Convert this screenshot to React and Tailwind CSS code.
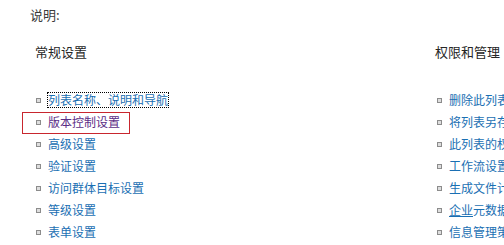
import React from 'react';

const leftLinks = [
  { label: '列表名称、说明和导航', focus: true },
  { label: '版本控制设置', visited: true, boxed: true },
  { label: '高级设置' },
  { label: '验证设置' },
  { label: '访问群体目标设置' },
  { label: '等级设置' },
  { label: '表单设置' },
];

const rightLinks = [
  { label: '删除此列表' },
  { label: '将列表另存为模板' },
  { label: '此列表的权限' },
  { label: '工作流设置' },
  { label: '生成文件计划报告' },
  { label: '企业元数据和关键字设置', underline: 2 },
  { label: '信息管理策略设置' },
];

function LinkRow({ link }) {
  const color = link.visited ? 'text-[#5b2d86]' : 'text-[#1a6fb3]';
  return (
    <li className="relative flex items-center h-[22px] whitespace-nowrap">
      {link.boxed && (
        <span className="absolute left-[-13px] top-[1px] w-[108px] h-[22px] border border-[#c8262e]" />
      )}
      <span className="block ml-[1px] mr-[7px] w-[5px] h-[5px] border border-[#8c8c8c] bg-[#dedede] shrink-0" />
      <a
        href="#"
        className={`${color} text-[12px] leading-[14px] ${link.focus ? 'outline outline-1 outline-dotted outline-black' : ''}`}
      >
        {link.underline ? (
          <>
            <span className="underline">{link.label.slice(0, link.underline)}</span>
            {link.label.slice(link.underline)}
          </>
        ) : (
          link.label
        )}
      </a>
    </li>
  );
}

export default function App() {
  return (
    <div
      className="w-[504px] h-[245px] overflow-hidden bg-white text-[12px] text-[#3b3b3b] pl-[30px] pt-[7px]"
      style={{ fontFamily: '"Noto Sans CJK SC", "Liberation Sans", sans-serif' }}
    >
      <p className="text-[13px] leading-[16px]">说明:</p>
      <div className="flex mt-[20px]">
        <div className="w-[405px] pl-[5px] shrink-0">
          <h3 className="text-[13px] leading-[18px] text-[#262626]">常规设置</h3>
          <ul className="mt-[28px]">
            {leftLinks.map((l) => (
              <LinkRow key={l.label} link={l} />
            ))}
          </ul>
        </div>
        <div className="shrink-0">
          <h3 className="text-[13px] leading-[18px] text-[#262626] whitespace-nowrap">权限和管理</h3>
          <ul className="mt-[28px] ml-[1px]">
            {rightLinks.map((l) => (
              <LinkRow key={l.label} link={l} />
            ))}
          </ul>
        </div>
      </div>
    </div>
  );
}
